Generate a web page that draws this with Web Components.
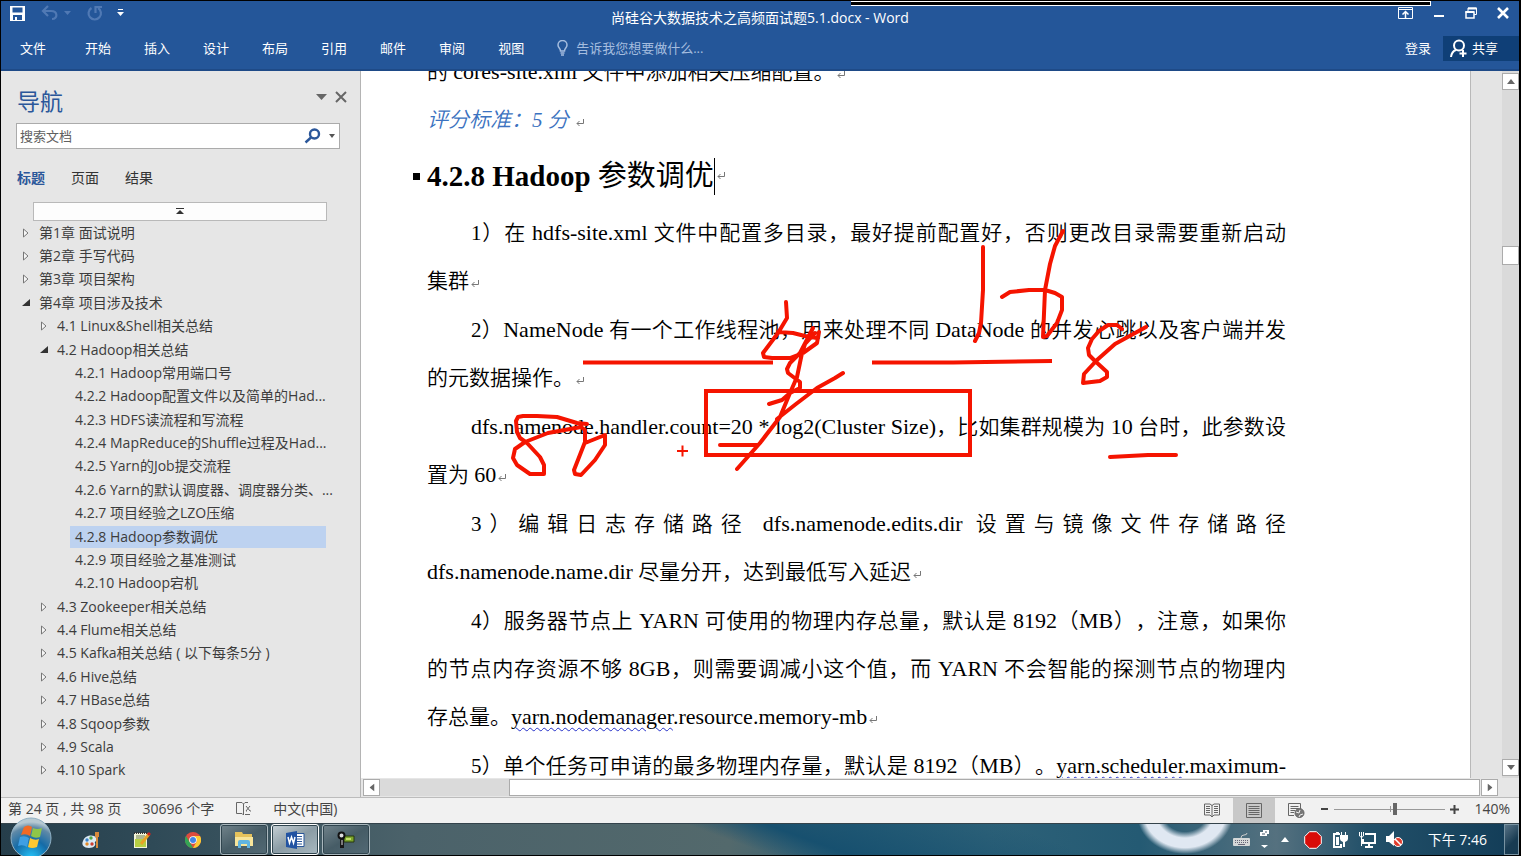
<!DOCTYPE html>
<html lang="zh-CN">
<head>
<meta charset="utf-8">
<title>尚硅谷大数据技术之高频面试题5.1.docx - Word</title>
<style>
html,body{margin:0;height:100%}
body{background:#000;font:14px/20px "Open Sans","Noto Sans CJK SC",sans-serif;overflow:hidden}
</style>
</head>
<body>
<word-app></word-app>
<script>
function define(name, html, setup) {
  const t = document.createElement('template');
  t.innerHTML = '<style>*{box-sizing:border-box}button{font:inherit;color:inherit;background:none;border:0;padding:0;margin:0}a{color:inherit;text-decoration:none}svg{display:block;flex:none}</style>' + html;
  customElements.define(name, class extends HTMLElement {
    constructor() {
      super();
      this.attachShadow({mode: 'open'}).appendChild(t.content.cloneNode(true));
      if (setup) setup(this, this.shadowRoot);
    }
  });
}

define('word-titlebar', `
<style>
:host{display:grid;grid-template-columns:1fr auto 1fr;height:34px;align-items:center;color:#fff;position:relative}
.quick{display:flex;align-items:center;padding:0 0 10px 8px}
.quick button:nth-child(2){margin-left:15px}
.quick button:nth-child(3){margin-left:6px}
.quick button:nth-child(4){margin-left:16px}
.quick button:nth-child(5){margin-left:14px}
.win{display:flex;justify-content:flex-end;align-items:center;padding:0 10px 10px 0;gap:20px}
h1{font:inherit;margin:0}
.strip{position:absolute;top:0;right:88px;width:580px;height:5px;background:#000;border:1px solid #fff;border-left:0}
</style>
<div class="quick">
<button aria-label="保存"><svg width="17" height="17" viewBox="0 0 17 17"><path fill="#fff" fill-rule="evenodd" d="M1 1h15v15H1zM3.500 2.500v5h10v-5zM4 10v5h2v-3h2v3h5v-5z"/><path fill="#fff" d="M3 9h11v1H3z"/></svg></button>
<button aria-label="撤消"><svg width="17" height="16" viewBox="0 0 17 16" fill="none" stroke="#5079b4" stroke-width="2.200"><path d="M7 1 2 6l5 5M2 6h8c7 0 7 8 1 8"/></svg></button>
<button aria-label="撤消选项"><svg width="7" height="4" viewBox="0 0 7 4"><path fill="#5079b4" d="M0 0h7L3.500 4z"/></svg></button>
<button aria-label="重复"><svg width="16" height="17" viewBox="0 0 16 17" fill="none" stroke="#5079b4" stroke-width="2.200"><path d="M4.500 3A6.200 6.200 0 1 0 11 3M8.500 8V2H15"/></svg></button>
<button aria-label="自定义快速访问工具栏"><svg width="7" height="8" viewBox="0 0 7 8"><path fill="#fff" d="M1 0h5v1H1zM0 3h7L3.500 7z"/></svg></button>
</div>
<h1>尚硅谷大数据技术之高频面试题5.1.docx - Word</h1>
<div class="win">
<button aria-label="功能区显示选项"><svg width="15" height="12" viewBox="0 0 15 12" fill="none" stroke="#fff"><path d="M.5.5h14v11H.5zM.5 2.500h14"/><path stroke-width="1.500" d="M7.500 11V4.500M4.500 7.500l3-3 3 3"/></svg></button>
<button aria-label="最小化"><svg width="12" height="12" viewBox="0 0 12 12"><path fill="#fff" d="M1 8h10v2H1z"/></svg></button>
<button aria-label="还原"><svg width="12" height="12" viewBox="0 0 12 12" fill="none" stroke="#fff"><path d="M3 4V1h8.500v6.500H9"/><path stroke-width="2" d="M3 1.500h8.500M.5 5h8.500"/><path stroke-width="1.500" d="M1 5h8v6H1z"/></svg></button>
<button aria-label="关闭"><svg width="12" height="12" viewBox="0 0 12 12"><path stroke="#fff" stroke-width="2.600" d="m1 1 10 10M11 1 1 11"/></svg></button>
</div>
<span class="strip"></span>`);

define('word-menu', `
<style>
:host{display:flex;align-items:center;height:36px;color:#fff;padding-bottom:8px;border-bottom:2px solid #1e4a87;font-size:13px}
nav{display:flex;padding-left:19px;gap:33px}
nav a:first-child{margin-right:6px}
.tell{display:flex;align-items:center;gap:8px;margin-left:33px;color:#a5bddf}
.right{margin-left:auto;display:flex;align-items:center;gap:12px}
.share{background:#0f3f77;height:25px;width:76px;display:flex;align-items:center;gap:4px;padding-left:7px}
</style>
<nav><a href="#">文件</a><a href="#">开始</a><a href="#">插入</a><a href="#">设计</a><a href="#">布局</a><a href="#">引用</a><a href="#">邮件</a><a href="#">审阅</a><a href="#">视图</a></nav>
<button class="tell"><svg width="11" height="16" viewBox="0 0 11 16" fill="none" stroke="#a5bddf" stroke-width="1.500"><path d="M3.500 11c0-3-2.500-3-2.500-6a4.500 4.500 0 0 1 9 0c0 3-2.500 3-2.500 6zM3.500 13h4M4 15h3"/></svg>告诉我您想要做什么...</button>
<div class="right"><button>登录</button><button class="share"><svg width="18" height="19" viewBox="0 0 18 19" fill="none" stroke="#fff" stroke-width="2"><circle cx="9" cy="6.500" r="5"/><path d="M1 18c.5-4 2-6 5-7M13 11v7M9.500 14.500h7"/></svg>共享</button></div>`);

define('nav-item', `
<style>
:host{display:flex;align-items:center;padding-left:calc(var(--level,0) * 18px);min-width:0;min-height:0;color:#3c3c3c}
button{width:18px;display:flex;justify-content:center;flex:none}
a{flex:1;min-width:0;height:22px;line-height:22px;white-space:nowrap;padding-left:4px}
:host([leaf]) button{display:none}
:host([leaf]) a{margin-left:17px;padding-left:5px}
:host([current]) a{background:#bdd2f0}
.open{display:none}
:host([open]) .open{display:block}
:host([open]) .shut{display:none}
</style>
<button aria-label="展开或折叠"><svg class="shut" width="8" height="10" viewBox="0 0 8 10"><path fill="#f6f6f6" stroke="#777" d="M1.500 1v8L6 5z"/></svg><svg class="open" width="8" height="8" viewBox="0 0 8 8"><path fill="#333" d="M8 0v7H0z"/></svg></button>
<a href="#"><slot></slot></a>`, el => el.style.setProperty('--level', el.getAttribute('level') || 0));

define('nav-pane', `
<style>
:host{display:flex;flex-direction:column;width:360px;flex:none;background:#e6e6e6;border-right:1px solid #b4b4b4;padding:16px 20px 15px 15px}
header{display:flex;align-items:center;height:28px;margin-right:-7px}
h2{font:400 23px/28px "Open Sans","Noto Sans CJK SC",sans-serif;color:#2b579a;margin:0;padding-left:1px;flex:1;align-self:flex-start}
header button{margin:-8px 0 0 8px}
.search{display:flex;align-items:center;border:1px solid #ababab;background:#fff;height:26px;margin-top:8px;padding:0 4px 0 3px;gap:8px}
input{border:0;outline:0;background:none;font:inherit;font-size:13px;flex:1;min-width:0;padding:0}
input::placeholder{color:#606060;opacity:1}
.tabs{display:flex;height:22px;margin-top:18px;padding-left:1px;gap:26px;color:#333}
.tabs button{line-height:22px}
.tabs button[aria-selected=true]{color:#2b579a;font-weight:700}
.top{margin:13px 13px 0 17px;height:19px;background:#fdfdfd;border:1px solid #b9b9b9;display:flex;align-items:center;justify-content:center}
.tree{flex:1;display:grid;grid-template-columns:minmax(0,1fr);grid-auto-rows:1fr;min-height:0;margin:0 14px 0 1px}
</style>
<header><h2>导航</h2><button aria-label="任务窗格选项"><svg width="11" height="6" viewBox="0 0 11 6"><path fill="#666" d="M0 0h11L5.500 6z"/></svg></button><button aria-label="关闭"><svg width="12" height="12" viewBox="0 0 12 12"><path stroke="#666" stroke-width="2" d="m1 1 10 10M11 1 1 11"/></svg></button></header>
<div class="search"><input aria-label="搜索文档" placeholder="搜索文档"><button aria-label="搜索"><svg width="17" height="16" viewBox="0 0 17 16" fill="none" stroke="#2b579a" stroke-width="2.400"><circle cx="10.500" cy="6" r="4.500"/><path d="m7 9.500-5.500 5"/></svg></button><button aria-label="搜索选项"><svg width="6" height="4" viewBox="0 0 6 4"><path fill="#555" d="M0 0h6L3 4z"/></svg></button></div>
<div class="tabs" role="tablist"><button role="tab" aria-selected="true">标题</button><button role="tab">页面</button><button role="tab">结果</button></div>
<button class="top" aria-label="跳转到文档开头"><svg width="8" height="7" viewBox="0 0 8 7"><path fill="#333" d="M0 0h8v1H0zM4 2l4 4H0z"/></svg></button>
<div class="tree"><slot></slot></div>`);

define('para-mark', `<style>:host{display:inline-block;width:8px;height:8px;margin-left:2px}</style><svg width="8" height="8" viewBox="0 0 8 8" fill="none" stroke="#777"><path d="M7.500 0v4.500H1M3.500 2 1 4.500 3.500 7"/></svg>`);

define('ink-layer', `
<style>:host{position:absolute;left:0;top:0;pointer-events:none}</style>
<svg width="1108" height="707" viewBox="361 71 1108 707" fill="none" stroke="#f51400" stroke-width="4" stroke-linecap="round" stroke-linejoin="round">
<path stroke-linecap="butt" stroke-linejoin="miter" d="M706 391h264v64H706zM583 362.500h190M872 362.500h81l99-1.500"/>
<path stroke-width="2" stroke-linecap="butt" d="M677 451h11M682.500 445.500v11"/>
<path d="M786 302l1 16-9 15-15 20 1 4 8 1h18l13-5 14-10 2-11M778 332l15 1 12 3 12 2M813 328l-13 25-10 10-3 6 1 4 12 9v6l-10 5-8 7-13 4M815 333l-10 11-3 9-5 24-7 16-10 24-20 26-23 26M843 373l-8 5-18 10-21 16-19 15M720 445h38"/>
<path d="M587 424l-10-1-20-6-20-1h-14l-5 1-2 4 1 11 3 6 7 5 13 14 4 8v9h-14l-13-9-4-7 2-9 10-7 23-9 33-6 4 3v12l-11 28 1 4 6 1 14-15 10-15v-10l-20 8"/>
<path d="M983 247v43l-2 33-2 10-4 8M1063 231l-8 15-5 18-5 26-2 47 4-1 10-13 5-13v-13l-7-4-10-3h-16l-19 2-8 5M1122 329l-5-4-9 0-9 6-7 8-4 9 1 7 6 6 12 11v5l-7 4-17 2 1-9 13-14 18-16 31-17M1110 457l38-2h28"/>
</svg>`);

define('doc-view', `
<style>
:host{display:flex;flex:1;min-width:0;background:#e4e4e4;position:relative;overflow:hidden}
article{flex:1;background:#fff;border-right:1px solid #b9b9b9;margin-right:31px;padding:0 184px 0 66px;color:#000;font:21px/48px "Liberation Serif","Noto Sans CJK SC",serif;font-weight:350;text-spacing-trim:space-all;text-autospace:no-autospace}
.first{margin:-23px 0 0}
p{margin:1px 0 0}
p span{display:block;white-space:nowrap}
p span:not(.end){text-align-last:justify}
.in{padding-left:44px}
b{font-weight:400;font-size:22px;line-height:24px}
.score{margin:0;font-style:italic;color:#3b72c0}
h3{margin:0;font:700 29px/64px "Liberation Serif","Noto Sans CJK SC",serif;display:flex;align-items:center;position:relative;white-space:pre}
h3 i{position:absolute;left:-14px;width:7px;height:7px;background:#000}
h3 em{font-style:normal;font-weight:400}
.caret{width:1px;height:37px;background:#000}
u{text-decoration:underline wavy #2430c8 1px;text-underline-offset:3px}
</style>
<article>
<p class="first"><span class="end">的 <b>cores-site.xml</b> 文件中添加相关压缩配置。<para-mark></para-mark></span></p>
<p class="score">评分标准：5 分 <para-mark></para-mark></p>
<h3><i></i>4.2.8 Hadoop <em>参数调优</em><span class="caret"></span><para-mark></para-mark></h3>
<p><span class="in">1）在 <b>hdfs-site.xml</b> 文件中配置多目录，最好提前配置好，否则更改目录需要重新启动</span><span class="end">集群<para-mark></para-mark></span></p>
<p><span class="in">2）<b>NameNode</b> 有一个工作线程池，用来处理不同 <b>DataNode</b> 的并发心跳以及客户端并发</span><span class="end">的元数据操作。<para-mark></para-mark></span></p>
<p><span class="in"><b>dfs.namenode.handler.count=20 * log2(Cluster Size)</b>，比如集群规模为 <b>10</b> 台时，此参数设</span><span class="end">置为 <b>60</b><para-mark></para-mark></span></p>
<p><span class="in">3）编辑日志存储路径 <b>dfs.namenode.edits.dir</b> 设置与镜像文件存储路径</span><span class="end"><b>dfs.namenode.name.dir</b> 尽量分开，达到最低写入延迟<para-mark></para-mark></span></p>
<p><span class="in">4）服务器节点上 <b>YARN</b> 可使用的物理内存总量，默认是 <b>8192</b>（<b>MB</b>），注意，如果你</span><span>的节点内存资源不够 <b>8GB</b>，则需要调减小这个值，而 <b>YARN</b> 不会智能的探测节点的物理内</span><span class="end">存总量。<b><u>yarn.nodemanager</u>.resource.memory-mb</b><para-mark></para-mark></span></p>
<p><span class="in">5）单个任务可申请的最多物理内存量，默认是 <b>8192</b>（<b>MB</b>）。<b><u>yarn.scheduler</u>.maximum-</b></span></p>
</article>
<ink-layer></ink-layer>`);

define('scroll-bar', `
<style>
:host{display:flex;flex:none;background:#dadada;width:17px;flex-direction:column;padding:2px 0}
:host([horizontal]){width:auto;height:19px;flex-direction:row;padding:1px 21px 1px 2px;background:#e6e6e6}
button{width:17px;height:17px;border:1px solid #ababab;background:#fff;display:flex;align-items:center;justify-content:center;flex:none}
.track{flex:1;display:flex;flex-direction:column;min-width:0}
.thumb{border:1px solid #ababab;background:#fff;height:19px;margin-top:156px}
:host([horizontal]) .track{background:#dadada;margin-right:1px}
:host([horizontal]) .thumb{margin:0 0 0 129px;height:17px}
:host([horizontal]) svg{transform:rotate(-90deg)}
</style>
<button class="a" aria-label="向前滚动"><svg width="8" height="5" viewBox="0 0 8 5"><path fill="#666" d="M4 0l4 5H0z"/></svg></button>
<div class="track"><div class="thumb"></div></div>
<button class="z" aria-label="向后滚动"><svg width="8" height="5" viewBox="0 0 8 5"><path fill="#666" d="M0 0h8L4 5z"/></svg></button>`);

define('status-bar', `
<style>
:host{display:flex;height:26px;align-items:center;background:#f1f1f1;border-top:1px solid #bcbcbc;color:#444;padding:0 9px 3px 7px}
.l{display:flex;gap:21px;align-items:center}
.r{margin-left:auto;display:flex;align-items:center}
.r .v{width:42px;height:25px;display:flex;align-items:center;justify-content:center;margin-top:2px}
.v[aria-pressed=true]{background:#c8c8c8}
.v + button:not(.v){margin-left:4px}
input{appearance:none;width:111px;height:14px;margin:0 5px;background:linear-gradient(#999,#999) 56px 4px/1px 6px no-repeat,linear-gradient(#999,#999) 0 7px/100% 1px no-repeat}
input::-webkit-slider-thumb{appearance:none;width:4px;height:12px;background:#666}
.pct{margin-left:15px}
</style>
<div class="l"><span>第 24 页 , 共 98 页</span><span>30696 个字</span><button aria-label="校对"><svg width="17" height="14" viewBox="0 0 17 14" fill="none" stroke="#666"><path d="M8.500 13V2L7 .5H1.500v11H7L8.500 13M8.500 2 10 .5h3M10 12.500h5M11 4l4 5M15 4l-4 5M11 9h1M15 9h1"/></svg></button><span>中文(中国)</span></div>
<div class="r">
<button class="v" aria-label="阅读视图"><svg width="16" height="15" viewBox="0 0 16 15" fill="none" stroke="#666"><path d="M8 2.500 6 1H.5v11H6l2 2 2-2h5.500V1H10zM8 2v12M2 3.500h4M2 5.500h4M2 7.500h4M2 9.500h4M10 3.500h4M10 5.500h4M10 7.500h4M10 9.500h4"/></svg></button>
<button class="v" aria-label="页面视图" aria-pressed="true"><svg width="16" height="15" viewBox="0 0 16 15" fill="none" stroke="#666"><path d="M.5.5h15v14H.5zM2.500 3.500h11M2.500 5.500h11M2.500 7.500h11M2.500 9.500h11M2.500 11.500h11"/></svg></button>
<button class="v" aria-label="Web 版式视图"><svg width="17" height="15" viewBox="0 0 17 15" fill="none" stroke="#666"><path d="M6 12.500H.5V.5h12V6M2.500 3.500h8M2.500 5.500h8M2.500 7.500H7M2.500 9.500H6"/><circle cx="11.500" cy="10" r="4.500" fill="#777"/><path stroke="#eee" d="M8 9l3 1 1-3M11 14l1-2 3-1"/></svg></button>
<button aria-label="缩小"><svg width="8" height="12" viewBox="0 0 8 12"><path fill="#444" d="M0 5h7v2H0z"/></svg></button>
<input type="range" aria-label="缩放" min="0" max="100" value="55">
<button aria-label="放大"><svg width="9" height="9" viewBox="0 0 9 9"><path fill="#444" d="M0 3.500h3.500V0h2v3.500H9v2H5.500V9h-2V5.500H0z"/></svg></button>
<span class="pct">140%</span>
</div>`);

define('task-bar', `
<style>
:host{display:flex;height:32px;align-items:center;color:#fff;position:relative;border-top:1px solid #34434b;
background:radial-gradient(ellipse 48px 40px at 78% -10px,transparent 44%,#e0e8f2 60%,#e0e8f2 84%,transparent 100%),linear-gradient(20deg,transparent 48%,#17506f 53%,transparent 68%),linear-gradient(90deg,#263e4b 0,#2f4a57 10%,#4b626a 27%,#53696c 48%,#2a6078 56%,#2d6178 65%,#245a73 75%,#55717f 84%,#225069 90%,#123c57 100%)}
.start{position:absolute;left:9px;top:-7px}
.apps{display:flex;align-items:center;padding-left:66px;height:100%}
.apps button{width:48px;height:31px;display:flex;align-items:center;justify-content:center;margin-right:3px}
.apps .run{border:1px solid #a9b7bd;border-radius:3px;background:linear-gradient(150deg,#71838b,#465c66 50%,#526974);box-shadow:inset 0 0 0 1px #30454f}
.apps .on{background:linear-gradient(150deg,#c7d1d6,#8b9ca5 50%,#a9b9c1);border-color:#fff}
.tray{margin-left:auto;display:flex;align-items:center;height:100%}
.tray button{margin-right:10px}
.tray .more{margin:0 15px 0 2px}
.time{margin:0 17px 0 14px}
.tray .desk{width:15px;height:100%;margin:0;border:1px solid #7893a2;background:linear-gradient(135deg,#587386,#183b52 60%)}
</style>
<button class="start" aria-label="开始"><svg width="42" height="39" viewBox="0 0 42 39"><defs><radialGradient id="o" cx=".5" cy="1" r=".9"><stop offset="0" stop-color="#25c5fb"/><stop offset=".5" stop-color="#156ba7"/><stop offset=".85" stop-color="#5f89a7"/><stop offset="1" stop-color="#b7c9d2"/></radialGradient></defs><circle cx="21" cy="21" r="20" fill="url(#o)" stroke="#8fb0c4"/><path fill="#f26a25" d="M14 10q4-3 8 0l-2 9q-4-3-9-1z"/><path fill="#8fc648" d="M23 11q4 2 9 0l-2 9q-5 2-9-1z"/><path fill="#3f9fe4" d="M10 20q5-2 9 1l-2 9q-4-3-9-1z"/><path fill="#fdc832" d="M20 21q5 3 9 1l-2 8q-5 2-9 0z"/></svg></button>
<div class="apps">
<button aria-label="画图"><svg width="20" height="18" viewBox="0 0 20 18"><path fill="#dce9f3" d="M2 10C4 4 13 3 15 7s-2 3-1 5-1 5-6 5-8-3-6-7z"/><circle cx="6" cy="9" r="1.700" fill="#3b83ca"/><circle cx="10" cy="7" r="1.700" fill="#50aa44"/><circle cx="6" cy="13" r="1.700" fill="#e28b2a"/><circle cx="11" cy="13" r="1.700" fill="#ce3e30"/><path fill="#d98a3c" d="M14 1h4v5h-1v11h-2V6h-1z"/></svg></button>
<button aria-label="记事本"><svg width="18" height="18" viewBox="0 0 18 18"><path fill="#f2f4da" d="M1 2h13v15H1z"/><path fill="#b6cf43" d="M2 8h11v8H2z"/><path stroke="#333" stroke-dasharray="1 1" stroke-width="2" d="M1 2h14"/><path stroke="#697b48" d="M3 5h9M3 7h8"/><path stroke="#e8a326" stroke-width="3" d="M8 13 16 3"/><path stroke="#c22" stroke-width="3" d="m15 4 2-2"/></svg></button>
<button aria-label="Chrome"><svg width="16" height="16" viewBox="0 0 16 16"><circle cx="8" cy="8" r="8" fill="#dd4b3e"/><path fill="#34a555" d="M1 4 7 14l1 2A8 8 0 0 1 1 4z"/><path fill="#fcc934" d="M8 4h7A8 8 0 0 1 8 16l4-7z"/><circle cx="8" cy="8" r="3.800" fill="#fff"/><circle cx="8" cy="8" r="3" fill="#4285e8"/></svg></button>
<button class="run" aria-label="资源管理器"><svg width="20" height="18" viewBox="0 0 20 18"><path fill="#e6c25b" d="M1 4V1h7l1 2h9v12H1z"/><path fill="#f8e59a" d="M1 6h18v9H1z"/><path fill="#62b5e0" d="M4 17v-6q0-2 2-2h8q2 0 2 2v6h-3v-4H7v4z"/></svg></button>
<button class="run on" aria-label="Word"><svg width="19" height="18" viewBox="0 0 19 18"><path fill="#fff" stroke="#2b579a" d="M9 2.500h9v13H9z"/><path stroke="#2b579a" d="M11 5.500h5M11 8h5M11 10.500h5M11 13h5"/><path fill="#2253a2" d="M0 2 11 0v18L0 16z"/><path fill="none" stroke="#fff" stroke-width="1.500" d="m2 6 1.500 6 2-6 2 6L9 6"/></svg></button>
<button class="run" aria-label="录屏工具"><svg width="18" height="18" viewBox="0 0 18 18"><path fill="#7ca62c" stroke="#27380f" d="M7 5h10v6H7z"/><path fill="#c3df6a" d="M9 7h5v2H9z"/><circle cx="4.500" cy="4.500" r="3" fill="#ddd" stroke="#111" stroke-width="2"/><path fill="#181818" d="M3 8h4v9H3z"/><path stroke="#ddd" d="M5 9v5"/></svg></button>
</div>
<div class="tray">
<button aria-label="键盘"><svg width="17" height="14" viewBox="0 0 17 14"><path fill="none" stroke="#ccc" d="M8 5q0-3 3-3t3-2"/><rect y="5" width="17" height="8" rx="1" fill="#d5d8d8"/><path stroke="#667" stroke-dasharray="1 1" d="M2 7.500h13M2 9.500h13"/><path stroke="#667" d="M5 11.500h7"/></svg></button>
<button aria-label="语言栏"><svg width="9" height="20" viewBox="0 0 9 20"><path fill="#fff" d="M3 0h6v4H7v2H0V2h3zM1 15h7l-3.500 3z"/><path fill="#456" d="M2 3.500h3v1H2zM5 1.500h2v1H5z"/></svg></button>
<button class="more" aria-label="显示隐藏的图标"><svg width="8" height="5" viewBox="0 0 8 5"><path fill="#fff" d="m4 0 4 5H0z"/></svg></button>
<button aria-label="录制"><svg width="18" height="18" viewBox="0 0 18 18"><path fill="#d80c08" stroke="#fff" d="M5.500.7h7l4.800 4.800v7l-4.800 4.800h-7L.7 12.500v-7z"/></svg></button>
<button aria-label="电源"><svg width="16" height="17" viewBox="0 0 16 17"><path fill="none" stroke="#fff" stroke-width="2" d="M8 3H2v13h7v-3"/><path fill="#fff" d="M4 1h3v2H4zM4 6h3v8H4zM9 1h1v3h3V1h1v3h2v4q0 2-3 3v5h-2v-5q-3-1-3-3V4h1z"/></svg></button>
<button aria-label="网络"><svg width="18" height="17" viewBox="0 0 18 17"><path fill="none" stroke="#fff" stroke-width="2" d="M7 3h10v9H5V8M11 12v3M7 16h8"/><path fill="none" stroke="#fff" d="M1.500 1v4q2 3 4 0V1M3.500 1v14"/></svg></button>
<button aria-label="音量"><svg width="18" height="17" viewBox="0 0 18 17"><path fill="#fff" d="M0 5h3l5-5v15l-5-4H0z"/><circle cx="12" cy="11" r="4.500" fill="#e13b2c" stroke="#fff"/><path stroke="#fff" stroke-width="1.500" d="m9 8 6 6"/></svg></button>
<span class="time">下午 7:46</span><button class="desk" aria-label="显示桌面"></button>
</div>`);

define('word-app', `
<style>
:host{display:flex;flex-direction:column;box-sizing:border-box;height:100vh;border:1px solid #000;border-right-width:2px;background:#e6e6e6}
.head{background:#245699}
main{display:flex;flex:1;min-height:0}
.edit{flex:1;min-width:0;display:flex;flex-direction:column}
.row{flex:1;min-height:0;display:flex}
</style>
<div class="head"><word-titlebar></word-titlebar><word-menu></word-menu></div>
<main>
<nav-pane>
<nav-item>第1章 面试说明</nav-item>
<nav-item>第2章 手写代码</nav-item>
<nav-item>第3章 项目架构</nav-item>
<nav-item open>第4章 项目涉及技术</nav-item>
<nav-item level="1">4.1 Linux&amp;Shell相关总结</nav-item>
<nav-item level="1" open>4.2 Hadoop相关总结</nav-item>
<nav-item level="2" leaf>4.2.1 Hadoop常用端口号</nav-item>
<nav-item level="2" leaf>4.2.2 Hadoop配置文件以及简单的Had...</nav-item>
<nav-item level="2" leaf>4.2.3 HDFS读流程和写流程</nav-item>
<nav-item level="2" leaf>4.2.4 MapReduce的Shuffle过程及Had...</nav-item>
<nav-item level="2" leaf>4.2.5 Yarn的Job提交流程</nav-item>
<nav-item level="2" leaf>4.2.6 Yarn的默认调度器、调度器分类、...</nav-item>
<nav-item level="2" leaf>4.2.7 项目经验之LZO压缩</nav-item>
<nav-item level="2" leaf current>4.2.8 Hadoop参数调优</nav-item>
<nav-item level="2" leaf>4.2.9 项目经验之基准测试</nav-item>
<nav-item level="2" leaf>4.2.10 Hadoop宕机</nav-item>
<nav-item level="1">4.3 Zookeeper相关总结</nav-item>
<nav-item level="1">4.4 Flume相关总结</nav-item>
<nav-item level="1">4.5 Kafka相关总结 ( 以下每条5分 )</nav-item>
<nav-item level="1">4.6 Hive总结</nav-item>
<nav-item level="1">4.7 HBase总结</nav-item>
<nav-item level="1">4.8 Sqoop参数</nav-item>
<nav-item level="1">4.9 Scala</nav-item>
<nav-item level="1">4.10 Spark</nav-item>
</nav-pane>
<div class="edit"><div class="row"><doc-view></doc-view><scroll-bar></scroll-bar></div><scroll-bar horizontal></scroll-bar></div>
</main>
<status-bar></status-bar>
<task-bar></task-bar>`);
</script>
</body>
</html>
